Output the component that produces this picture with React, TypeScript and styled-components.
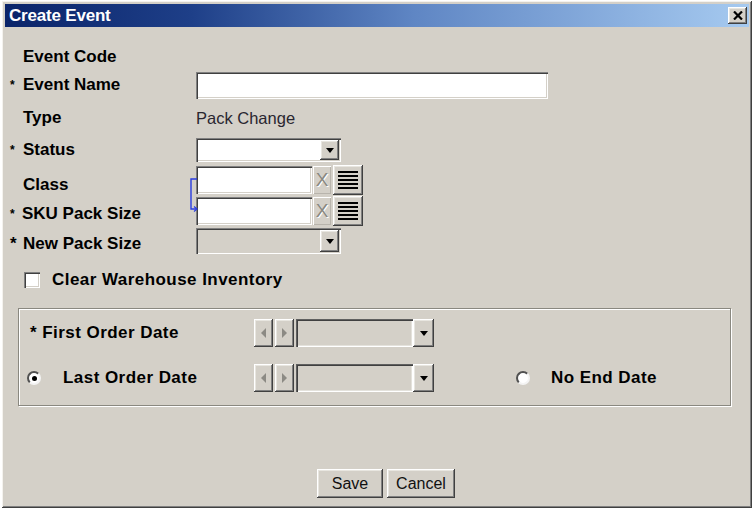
import React from "react";
import styled, { createGlobalStyle, css } from "styled-components";

const Global = createGlobalStyle`
  html, body { margin: 0; padding: 0; background: #ffffff; overflow: hidden; }
  body { font-family: "Liberation Sans", Arial, sans-serif; }
`;

const raised = css`
  background: #d4d0c8;
  box-shadow: inset -1px -1px #404040, inset 1px 1px #ffffff, inset -2px -2px #808080,
    inset 2px 2px #e8e6e0;
`;

const sunken = css`
  box-shadow: inset 1px 1px #808080, inset 2px 2px #404040, inset -1px -1px #ffffff,
    inset -2px -2px #d4d0c8;
`;

const Window = styled.div`
  margin: 1px 0 0 2px;
  width: 750px;
  height: 507px;
  box-sizing: border-box;
  padding: 3px;
  background: #d4d0c8;
  box-shadow: inset -1px -1px #404040, inset 1px 1px #f4f2ee, inset -2px -2px #808080,
    inset 2px 2px #d4d0c8;
  display: flex;
  flex-direction: column;
`;

const TitleBar = styled.div`
  height: 23px;
  flex: none;
  display: flex;
  align-items: center;
  justify-content: space-between;
  padding: 0 2px 0 4px;
  background: linear-gradient(to right, #0a246a 0%, #1e3f88 25%, #5f86c4 55%, #a6caf0 100%);
`;

const Title = styled.span`
  color: #ffffff;
  font-weight: bold;
  font-size: 17px;
  letter-spacing: -0.2px;
`;

const CloseBtn = styled.div`
  ${raised};
  width: 19px;
  height: 17px;
  display: flex;
  align-items: center;
  justify-content: center;
  flex: none;
`;

const Content = styled.div`
  flex: 1;
  display: flex;
  flex-direction: column;
  padding-top: 17px;
`;

const Row = styled.div<{ $h: number }>`
  display: flex;
  align-items: center;
  height: ${(p) => p.$h}px;
  flex: none;
`;

const Star = styled.span<{ $small?: boolean; $dy?: number }>`
  width: 18px;
  flex: none;
  box-sizing: border-box;
  padding-left: 5px;
  padding-top: ${(p) => (p.$dy ?? 0) * 2}px;
  font-weight: bold;
  font-size: ${(p) => (p.$small ? 12 : 17)}px;
  color: #000;
`;

const Label = styled.span<{ $w?: number; $dy?: number; $wide?: boolean }>`
  width: ${(p) => p.$w ?? 173}px;
  flex: none;
  box-sizing: border-box;
  padding-top: ${(p) => (p.$dy ?? 0) * 2}px;
  font-weight: bold;
  font-size: 17px;
  letter-spacing: ${(p) => (p.$wide ? 0.45 : 0)}px;
  color: #000;
  white-space: nowrap;
`;

const Value = styled.span`
  font-size: 16.5px;
  color: #2a2630;
`;

const Field = styled.div<{ $w: number; $h: number; $disabled?: boolean }>`
  ${sunken};
  width: ${(p) => p.$w}px;
  height: ${(p) => p.$h}px;
  box-sizing: border-box;
  background-color: ${(p) => (p.$disabled ? "#d4d0c8" : "#ffffff")};
  display: flex;
  justify-content: flex-end;
  padding: 2px;
  flex: none;
`;

const DropBtn = styled.div<{ $w?: number }>`
  ${raised};
  width: ${(p) => p.$w ?? 18}px;
  height: 100%;
  box-sizing: border-box;
  display: flex;
  align-items: center;
  justify-content: center;
  flex: none;
`;

const ArrowDown = styled.span`
  width: 0;
  height: 0;
  border-left: 4px solid transparent;
  border-right: 4px solid transparent;
  border-top: 5px solid #000;
`;

const LookupBlock = styled.div`
  position: relative;
  display: flex;
  flex-direction: column;
`;

const Bracket = styled.svg`
  position: absolute;
  left: 184px;
  top: 14px;
`;

const ClearBtn = styled.div`
  width: 18px;
  height: 28px;
  margin-left: 1px;
  flex: none;
  background: #d4d0c8;
  box-shadow: inset 1px 1px #ffffff, inset -1px -1px #b8b4ac;
  display: flex;
  align-items: center;
  justify-content: center;
  color: #8a8880;
  font-size: 19px;
  text-shadow: 1px 1px 0 #ffffff;
`;

const ListBtn = styled.div`
  ${raised};
  width: 30px;
  height: 30px;
  margin-left: 2px;
  flex: none;
  display: flex;
  align-items: center;
  justify-content: center;
`;

const Check = styled.div`
  ${sunken};
  background-color: #ffffff;
  width: 16px;
  height: 16px;
  margin-left: 19px;
  margin-right: 12px;
  flex: none;
`;

const Group = styled.div`
  margin: 4px 0 0 13px;
  width: 713px;
  box-sizing: border-box;
  border: 1px solid #8a8880;
  box-shadow: inset 1px 1px #ffffff, 1px 1px 0 #ffffff;
  padding: 10px 0 13px 8px;
  display: flex;
  flex-direction: column;
  gap: 17px;
`;

const GroupRow = styled.div`
  display: flex;
  align-items: center;
  height: 28px;
`;

const DateCtl = styled.div`
  display: flex;
  align-items: stretch;
  height: 28px;
  flex: none;
`;

const NavBtn = styled.div`
  ${raised};
  width: 19px;
  height: 28px;
  margin-right: 2px;
  display: flex;
  align-items: center;
  justify-content: center;
`;

const NavArrow = styled.span<{ $dir: "l" | "r" }>`
  width: 0;
  height: 0;
  border-top: 5px solid transparent;
  border-bottom: 5px solid transparent;
  ${(p) =>
    p.$dir === "l" ? "border-right: 5px solid #8c8a84;" : "border-left: 5px solid #8c8a84;"}
`;

const DateField = styled.div`
  width: 117px;
  height: 28px;
  box-sizing: border-box;
  background: #d4d0c8;
  box-shadow: inset 1px 1px #606060, inset 2px 2px #404040, inset -1px -1px #ffffff,
    inset -2px -2px #e4e2dc;
`;

const Radio = styled.div<{ $on?: boolean; $ml: number }>`
  width: 14px;
  height: 14px;
  margin-left: ${(p) => p.$ml}px;
  border-radius: 50%;
  background: #ffffff;
  box-sizing: border-box;
  border: 2px solid;
  border-color: #505050 #f4f4f4 #f4f4f4 #505050;
  display: flex;
  align-items: center;
  justify-content: center;
  flex: none;
  &::after {
    content: "";
    width: 5px;
    height: 5px;
    border-radius: 50%;
    background: ${(p) => (p.$on ? "#000" : "transparent")};
  }
`;

const Footer = styled.div`
  margin-top: auto;
  display: flex;
  gap: 4px;
  padding: 0 0 7px 312px;
`;

const Button = styled.div<{ $w: number }>`
  ${raised};
  width: ${(p) => p.$w}px;
  height: 29px;
  display: flex;
  align-items: center;
  justify-content: center;
  font-size: 16px;
  color: #111;
`;

const ListIcon = () => (
  <svg width="22" height="22" viewBox="0 0 22 22">
    {[2, 6, 10, 14, 18].map((y) => (
      <rect key={y} x="1" y={y} width="20" height="2" fill="#000" />
    ))}
  </svg>
);

const CloseIcon = () => (
  <svg width="10" height="9" viewBox="0 0 10 9">
    <path d="M1 0.5 L9 8.5 M9 0.5 L1 8.5" stroke="#000" strokeWidth="2.2" />
  </svg>
);

const Select = ({ w, disabled }: { w: number; disabled?: boolean }) => (
  <Field $w={w} $h={disabled ? 26 : 24} $disabled={disabled}>
    <DropBtn $w={19}>
      <ArrowDown />
    </DropBtn>
  </Field>
);

const Lookup = () => (
  <>
    <Field $w={116} $h={28} />
    <ClearBtn>X</ClearBtn>
    <ListBtn>
      <ListIcon />
    </ListBtn>
  </>
);

const DateControl = () => (
  <DateCtl>
    <NavBtn>
      <NavArrow $dir="l" />
    </NavBtn>
    <NavBtn>
      <NavArrow $dir="r" />
    </NavBtn>
    <DateField />
    <DropBtn $w={21}>
      <ArrowDown />
    </DropBtn>
  </DateCtl>
);

export default function App() {
  return (
    <>
      <Global />
      <Window>
        <TitleBar>
          <Title>Create Event</Title>
          <CloseBtn>
            <CloseIcon />
          </CloseBtn>
        </TitleBar>
        <Content>
          <Row $h={26}>
            <Star />
            <Label>Event Code</Label>
          </Row>
          <Row $h={30}>
            <Star $small>*</Star>
            <Label>Event Name</Label>
            <Field $w={352} $h={27} />
          </Row>
          <Row $h={36}>
            <Star />
            <Label>Type</Label>
            <Value>Pack Change</Value>
          </Row>
          <Row $h={28}>
            <Star $small>*</Star>
            <Label>Status</Label>
            <Select w={145} />
          </Row>
          <LookupBlock>
            <Bracket width="10" height="36" viewBox="0 0 10 36">
              <path d="M8 1 H2 V31 H7" fill="none" stroke="#2a3ce0" strokeWidth="1.4" />
              <path d="M5 28.5 L8 31 L5 33.5" fill="none" stroke="#2a3ce0" strokeWidth="1.2" />
            </Bracket>
            <Row $h={31}>
              <Star />
              <Label $dy={5}>Class</Label>
              <Lookup />
            </Row>
            <Row $h={31}>
              <Star $small $dy={3}>*</Star>
              <Label $dy={3} style={{ marginLeft: -1, width: 174 }}>
                SKU Pack Size
              </Label>
              <Lookup />
            </Row>
          </LookupBlock>
          <Row $h={30}>
            <Star $dy={3}>*</Star>
            <Label $dy={3}>New Pack Size</Label>
            <Select w={145} disabled />
          </Row>
          <Row $h={48}>
            <Check />
            <Label $w={300} $wide>
              Clear Warehouse Inventory
            </Label>
          </Row>
          <Group>
            <GroupRow>
              <Label $w={227} $wide style={{ paddingLeft: 3 }}>
                * First Order Date
              </Label>
              <DateControl />
            </GroupRow>
            <GroupRow>
              <Radio $on $ml={0} />
              <Label $w={191} $wide style={{ marginLeft: 22 }}>
                Last Order Date
              </Label>
              <DateControl />
              <Radio $ml={82} />
              <Label $w={150} $wide style={{ marginLeft: 21 }}>
                No End Date
              </Label>
            </GroupRow>
          </Group>
          <Footer>
            <Button $w={66}>Save</Button>
            <Button $w={68}>Cancel</Button>
          </Footer>
        </Content>
      </Window>
    </>
  );
}
